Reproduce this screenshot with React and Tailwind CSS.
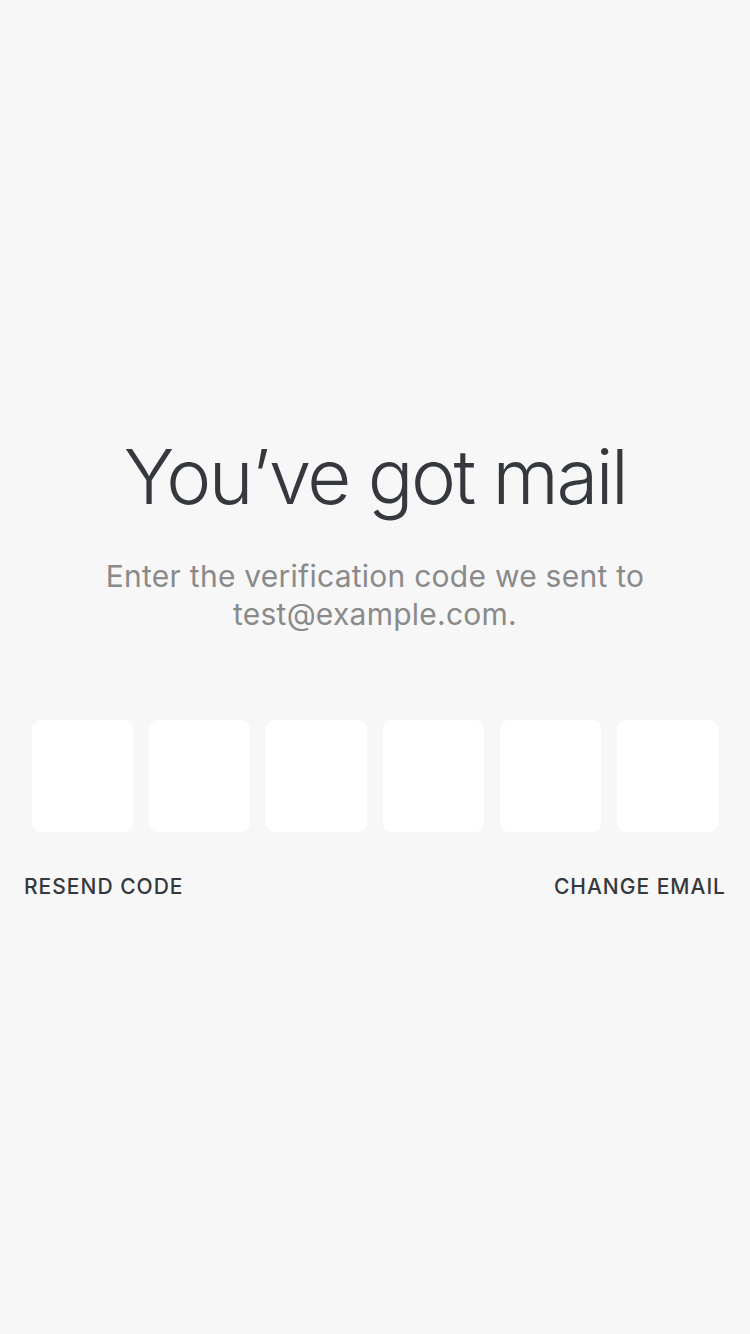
export default function App() {
  const boxes = [0, 1, 2, 3, 4, 5];

  return (
    <div
      className="min-h-[1334px] w-full bg-[#f7f7f7] text-[#35383c]"
      style={{ fontFamily: "Inter, 'Noto Sans', sans-serif" }}
    >
      <div className="pt-[424px] flex flex-col items-center">
        <h1 className="text-[76px] leading-[104px] font-light tracking-[-2.5px] text-[#35383c]">
          You’ve got mail
        </h1>
        <p className="mt-[29px] text-center text-[30px] leading-[38px] tracking-[0.25px] text-[#8a8a8a] px-6">
          Enter the verification code we sent to
          <br />
          test@example.com.
        </p>
      </div>

      {/* code inputs */}
      <div className="mt-[87px] px-[32px] flex gap-[16px]">
        {boxes.map((i) => (
          <div key={i} className="h-[112px] flex-1 rounded-[9px] bg-white" />
        ))}
      </div>

      <div className="mt-[41px] px-[24px] flex justify-between">
        <button className="text-[21px] leading-[28px] font-medium tracking-[1px] text-[#35383c]">
          RESEND CODE
        </button>
        <button className="text-[21px] leading-[28px] font-medium tracking-[1px] text-[#35383c]">
          CHANGE EMAIL
        </button>
      </div>
    </div>
  );
}
